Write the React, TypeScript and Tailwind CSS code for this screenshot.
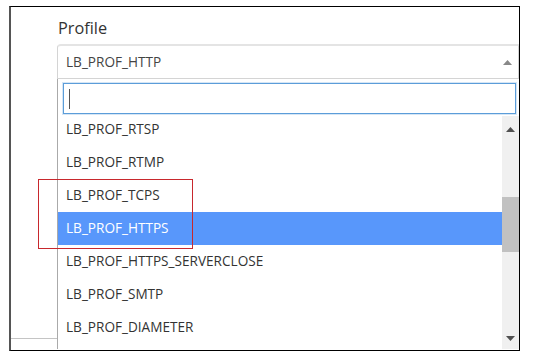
import React from "react";

const options = [
  "LB_PROF_RTSP",
  "LB_PROF_RTMP",
  "LB_PROF_TCPS",
  "LB_PROF_HTTPS",
  "LB_PROF_HTTPS_SERVERCLOSE",
  "LB_PROF_SMTP",
  "LB_PROF_DIAMETER",
];

export default function App() {
  const selected = "LB_PROF_HTTPS";

  return (
    <div className="w-[533px] h-[361px] bg-white font-['Open_Sans',sans-serif] pt-[6px] pl-[9px]">
      {/* Screenshot frame */}
      <div className="relative w-[511px] h-[345px] border border-black border-l-2 border-l-[#555] overflow-hidden pl-[46px] pt-[10px]">
        <div className="w-[462px] flex flex-col">
          <label className="text-[16.3px] leading-[22px] text-[#333] mb-[5px] pl-px">Profile</label>

          {/* Select box */}
          <div className="h-[35px] border border-[#d4d4d4] border-t-2 border-t-[#e4e4e4] rounded-tl-[4px] flex items-center justify-between pl-2 pr-[6px] bg-white">
            <span className="text-[13.6px] text-[#444]">LB_PROF_HTTP</span>
            <svg width="9" height="5" viewBox="0 0 9 5">
              <path d="M0 5 L4.5 0 L9 5 Z" fill="#888" />
            </svg>
          </div>

          {/* Dropdown */}
          <div className="border-l border-[#aaa] flex flex-col h-[270px]">
            <div className="pt-[4px] pl-[5px] pb-[2px]">
              <div className="w-[453px] h-[31px] border border-[#5b9dd9] shadow-[0_0_0_1px_rgba(91,157,217,0.25)] flex items-center pl-[5px]">
                <div className="w-px h-[20px] bg-[#555]" />
              </div>
            </div>

            <div className="flex flex-1 overflow-hidden">
              <ul className="flex-1 overflow-hidden">
                <div className="-mt-[3px]">
                  {options.map((o) => (
                    <li
                      key={o}
                      className={`h-[33px] flex items-center pl-2 text-[13.6px] ${
                        o === selected ? "bg-[#5897fb] text-white" : "text-[#333]"
                      }`}
                    >
                      {o}
                    </li>
                  ))}
                </div>
              </ul>

              {/* Scrollbar */}
              <div className="w-[17px] bg-[#f0f0f0] flex flex-col items-center">
                <div className="h-[17px] flex items-center justify-center pt-[9px]">
                  <svg width="9" height="5" viewBox="0 0 9 5">
                    <path d="M0 5 L4.5 0 L9 5 Z" fill="#505050" />
                  </svg>
                </div>
                <div className="mt-[64px] w-[17px] h-[55px] bg-[#c1c1c1]" />
                <div className="flex-1" />
                <div className="h-[17px] flex items-center justify-center pb-[4px]">
                  <svg width="9" height="5" viewBox="0 0 9 5">
                    <path d="M0 0 L4.5 5 L9 0 Z" fill="#505050" />
                  </svg>
                </div>
              </div>
            </div>
          </div>
        </div>

        {/* Background page line */}
        <div className="absolute left-0 top-[331px] w-[46px] h-px bg-[#c4c4c4]" />

        {/* Annotation */}
        <div className="absolute left-[27px] top-[172px] w-[155px] h-[70px] border border-[#c8282d]" />
      </div>
    </div>
  );
}
